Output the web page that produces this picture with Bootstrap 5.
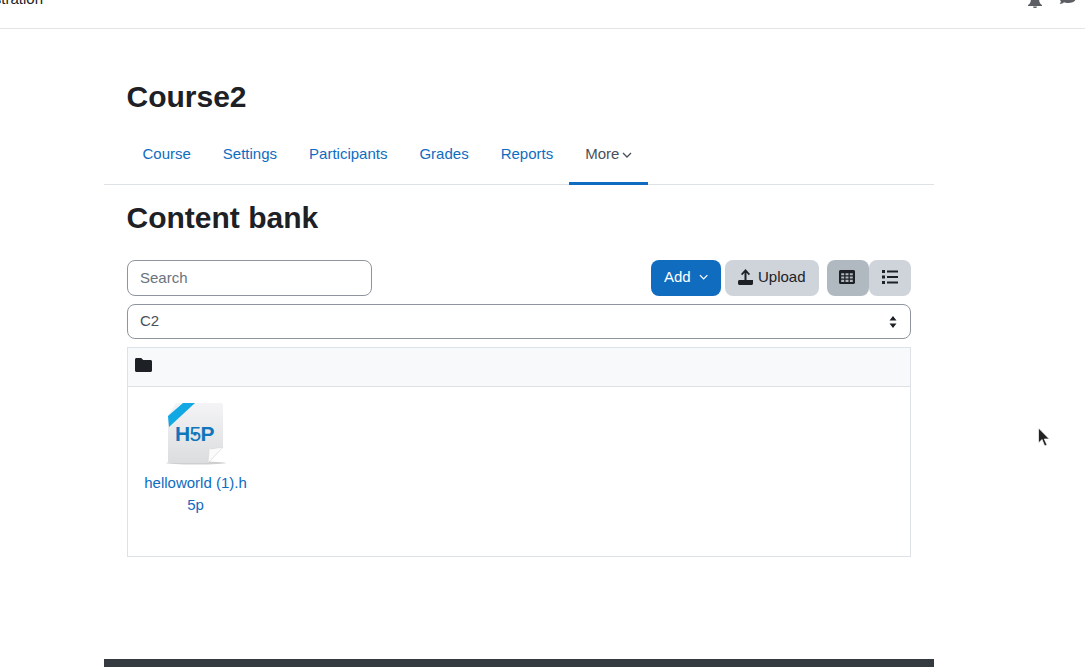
<!DOCTYPE html>
<html lang="en">
<head>
<meta charset="UTF-8">
<title>Content bank</title>
<link href="https://cdn.jsdelivr.net/npm/bootstrap@5.3.3/dist/css/bootstrap.min.css" rel="stylesheet">
<style>
html, body { height: 667px; overflow: hidden; }
body { font-family: "Liberation Sans", Arial, sans-serif; font-size: 15px; color: #1d2125; background: #fff; line-height: 22.5px; }
a { color: #0f6cbf; text-decoration: none; }
.top-strip { height: 29px; border-bottom: 1px solid #e3e4e6; padding-right: 9px; overflow: hidden; }
.crumb-clip { width: 43px; height: 10px; overflow: hidden; display: flex; justify-content: flex-end; align-items: flex-end; white-space: nowrap; color: #1d2125; line-height: 22px; }
.top-icons { height: 8px; overflow: hidden; }
.page-wrap { width: 830px; margin-left: 104px; height: 638px; display: flex; flex-direction: column; }
.course-head { padding: 50px 23px 0 22.5px; }
.course-head h1 { font-size: 30px; font-weight: 700; line-height: 36px; margin: 0; }
.course-tabs { margin-top: 16px; height: 54px; border-bottom: 1px solid #dee2e6; flex-wrap: nowrap; padding-left: 22.5px; }
.course-tabs .nav-link { color: #0f6cbf; padding: 0 16px 4px; height: 54px; border-bottom: 3px solid transparent; display: flex; align-items: center; }
.course-tabs .nav-link.now { color: #495057; border-bottom-color: #0f6cbf; gap: 3px; margin-left: -.5px; padding-left: 16.5px; }
.main-area { padding: 0 23px; flex: 1; }
.main-area h2 { font-size: 30px; font-weight: 700; line-height: 36px; margin: 15px 0 24px -.5px; }
.bank-search { width: 245px; height: 36px; border-radius: 8px; border-color: #8f959e; font-size: 15px; padding: 5px 12px 7px; color: #1d2125; }
.bank-search::placeholder { color: #6a737b; }
.bank-select { height: 35px; border-radius: 8px; border-color: #8f959e; font-size: 15px; color: #495057; padding: 5px 12px; margin-top: 8px; background-position: right 12px center; background-size: 10px 14px; background-image: url("data:image/svg+xml,%3Csvg xmlns='http://www.w3.org/2000/svg' viewBox='0 0 10 14'%3E%3Cpath d='M5 1l3.500 4.500h-7zM5 13L1.500 8.500h7z' fill='%231d2125'/%3E%3C/svg%3E"); }
.tool-btn { height: 36px; border-radius: 8px; font-size: 15px; padding: 0 13px 2px; display: inline-flex; align-items: center; border: 0; }
.btn-add { width: 70px; background: #0f6cbf; color: #fff; gap: 8px; }
.btn-add:hover { background: #0f6cbf; color: #fff; }
.btn-up { width: 94px; background: #ced4da; color: #1d2125; gap: 5px; margin-left: 4px; }
.view-pair { margin-left: 8px; }
.view-btn { width: 42px; height: 36px; background: #ced4da; display: flex; align-items: center; justify-content: center; border-radius: 8px; padding-bottom: 2px; }
.view-btn.on { background: #b1b9c0; padding-right: 2px; }
.bank-box { margin-top: 8px; height: 210px; border: 1px solid #dee2e6; }
.bank-bar { height: 39px; background: #f8f9fa; border-bottom: 1px solid #dee2e6; padding: 0 0 4px 7px; display: flex; align-items: center; }
.bank-file { width: 120px; margin: 13px 0 0 7.5px; padding: 0 8px; text-align: center; word-break: break-all; line-height: 22px; }
.bank-file svg { display: block; margin: 0 auto 6px; }
.foot-bar { width: 830px; height: 8px; background: #343a40; margin-top: auto; }
.mouse-ptr { position: absolute; left: 1037px; top: 427px; }
</style>
</head>
<body>
<div class="top-strip d-flex justify-content-between">
  <div class="crumb-clip"><span>Site administration</span></div>
  <div class="top-icons d-flex gap-3">
    <svg width="16" height="8" viewBox="0 0 16 8"><path d="M1 5c2-1 3-3 3-7h8c0 4 1 6 3 7v1H1zM6 6.500h4c0 1-1 1.500-2 1.500S6 7.500 6 6.500z" fill="#5b5f64"/></svg>
    <svg width="17" height="8" viewBox="0 0 17 8"><path d="M0-3h17v1c0 3-3 5-8 5-1.500 0-3-.2-4-.7C4 3.200 2.500 4 .5 4 1.500 3 2 2 1.800 1 .7 0 0-1 0-3z" fill="#5b5f64"/></svg>
  </div>
</div>
<div class="page-wrap">
  <div class="course-head"><h1>Course2</h1></div>
  <ul class="nav course-tabs">
    <li class="nav-item"><a class="nav-link" href="#">Course</a></li>
    <li class="nav-item"><a class="nav-link" href="#">Settings</a></li>
    <li class="nav-item"><a class="nav-link" href="#">Participants</a></li>
    <li class="nav-item"><a class="nav-link" href="#">Grades</a></li>
    <li class="nav-item"><a class="nav-link" href="#">Reports</a></li>
    <li class="nav-item"><a class="nav-link now" href="#">More
      <svg width="10" height="6" viewBox="0 0 10 6"><path d="M1 1l4 4 4-4" fill="none" stroke="#495057" stroke-width="1.300"/></svg></a></li>
  </ul>
  <div class="main-area">
    <h2>Content bank</h2>
    <div class="d-flex align-items-center">
      <input class="form-control bank-search" type="text" placeholder="Search">
      <div class="ms-auto d-flex align-items-center">
        <button class="btn tool-btn btn-add">Add
          <svg width="10" height="6" viewBox="0 0 10 6"><path d="M1 1l4 4 4-4" fill="none" stroke="#fff" stroke-width="1.300"/></svg></button>
        <button class="btn tool-btn btn-up">
          <svg width="15" height="16" viewBox="0 0 15 16"><path d="M7.500 0L12 5l-1.200 1.200L8.500 3.700V11h-2V3.700L4.200 6.200 3 5z" fill="#1d2125"/><path d="M1.500 11H15v3.500c0 .8-.7 1.500-1.500 1.500h-12C.7 16 0 15.300 0 14.500v-2C0 11.700.7 11 1.500 11z" fill="#1d2125"/></svg>
          Upload</button>
        <div class="view-pair d-flex">
          <div class="view-btn on">
            <svg width="16" height="14" viewBox="0 0 16 14"><path fill-rule="evenodd" d="M1.500 0h13C15.300 0 16 .7 16 1.500v11c0 .8-.7 1.500-1.500 1.500h-13C.7 14 0 13.300 0 12.500v-11C0 .7.700 0 1.500 0zM2.200 3.200v2.100h3v-2.100zm4.300 0v2.100h3v-2.100zm4.300 0v2.100h3v-2.100zM2.200 6.600v1.900h3V6.600zm4.300 0v1.900h3V6.600zm4.300 0v1.900h3V6.600zM2.200 9.800V12h3V9.800zm4.300 0V12h3V9.800zm4.300 0V12h3V9.800z" fill="#1d2125"/></svg>
          </div>
          <div class="view-btn">
            <svg width="16" height="14" viewBox="0 0 16 14"><path d="M0 0h3v3H0zM0 5.500h3v3H0zM0 11h3v3H0zM5 .5h11v2H5zM5 6h11v2H5zM5 11.500h11v2H5z" fill="#1d2125"/></svg>
          </div>
        </div>
      </div>
    </div>
    <select class="form-select bank-select"><option>C2</option></select>
    <div class="bank-box">
      <div class="bank-bar">
        <svg width="17" height="14" viewBox="0 0 17 14"><path d="M1.500 0h4.700l2 2h7.300c.8 0 1.500.7 1.500 1.500v9c0 .8-.7 1.500-1.500 1.500h-14C.7 14 0 13.300 0 12.500v-11C0 .7.700 0 1.500 0z" fill="#1d2125"/></svg>
      </div>
      <div class="bank-file">
        <svg width="64" height="66" viewBox="164 400 64 66">
          <defs><linearGradient id="pg" x1="0" y1="0" x2="0" y2="1"><stop offset="0" stop-color="#f4f4f6"/><stop offset="1" stop-color="#dcdddf"/></linearGradient></defs>
          <ellipse cx="196" cy="463" rx="30" ry="1.500" fill="#cfcfcf"/>
          <path d="M176 403h45c1 0 2 1 2 2v42l-15 16h-38c-1 0-2-1-2-2v-45z" fill="url(#pg)"/>
          <path d="M208 463l1-13c0-1 1-2 2-1l12-2z" fill="#fbfbfb" stroke="#cfcfcf" stroke-width=".5"/>
          <path d="M168 416l15-13h12l-26 24z" fill="#12a8e3"/>
          <text x="175" y="441" font-family="Liberation Sans, sans-serif" font-weight="700" font-size="21" fill="#0f76bb">H</text>
          <text x="189.500" y="441" font-family="Liberation Sans, sans-serif" font-size="21" fill="#0f76bb">5</text>
          <text x="200.500" y="441" font-family="Liberation Sans, sans-serif" font-weight="700" font-size="21" fill="#0f76bb">P</text>
          <circle cx="195" cy="434" r="1.800" fill="#0f76bb"/>
        </svg>
        <a href="#">helloworld (1).h5p</a>
      </div>
    </div>
  </div>
  <div class="foot-bar"></div>
</div>
<svg class="mouse-ptr" width="15" height="21" viewBox="0 0 15 21"><path d="M1.500 1v15l3.500-3.500 2.700 6.500 2.300-1-2.700-6h5z" fill="#222" stroke="#fff" stroke-width=".7"/></svg>
<script src="https://cdn.jsdelivr.net/npm/bootstrap@5.3.3/dist/js/bootstrap.bundle.min.js"></script>
</body>
</html>
